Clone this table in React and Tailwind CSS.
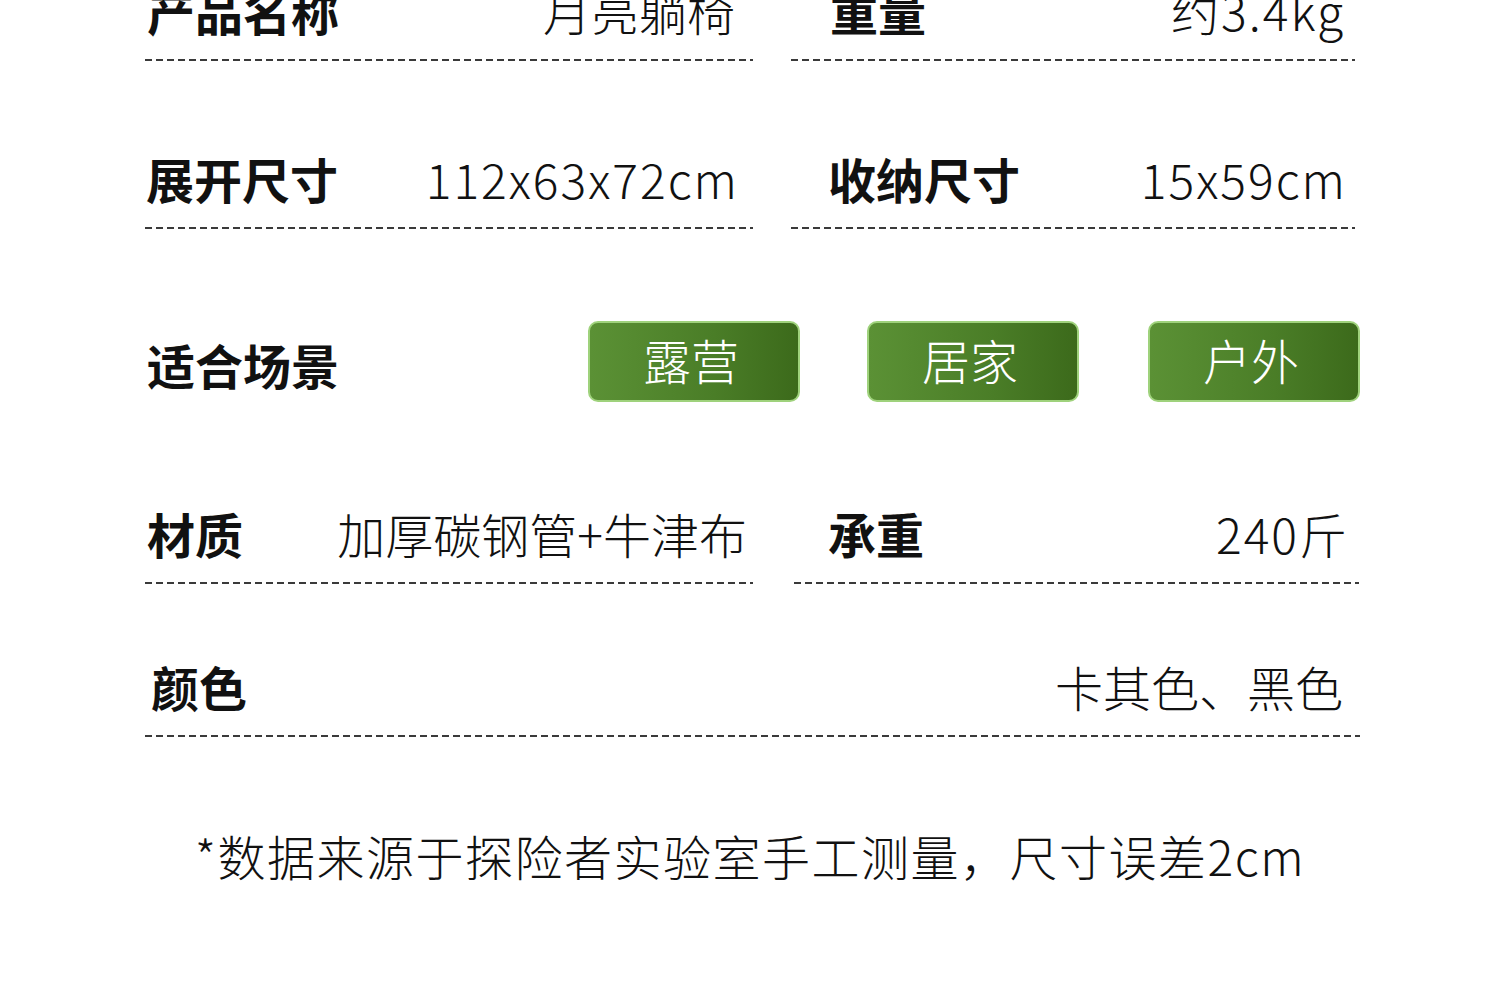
import React from 'react';

const FONT = "font-['Noto_Sans_CJK_SC','Noto_Sans',sans-serif]";
const DASH = 'h-[2px] bg-[repeating-linear-gradient(90deg,#3a3a3a_0_7px,transparent_7px_11px)]';

const SCENES = ['露营', '居家', '户外'];

function Cell({ label, value, labelPad = '', valuePad = 'pr-[16px]', width = 'w-[608px]', wide = false }) {
  return (
    <div className={width}>
      <div className={`flex h-[56px] items-start justify-between leading-[46px] ${valuePad}`}>
        <span className={`text-[48px] font-bold text-[#111] ${labelPad}`}>{label}</span>
        <span className={`text-[48px] font-light text-[#111] ${wide ? 'tracking-[2px] -mr-[2px]' : ''}`}>{value}</span>
      </div>
      <div className={`mt-[16px] ${DASH}`} />
    </div>
  );
}

export default function App() {
  return (
    <div className={`w-[1500px] h-[1000px] overflow-hidden bg-white ${FONT}`}>
      <div className="mt-[-13px] pl-[145px]">
        {/* Name + weight */}
        <div className="flex gap-[38px]">
          <Cell label="产品名称" value="月亮躺椅" labelPad="pl-[2px]" valuePad="pr-[18px]" />
          <Cell label="重量" value="约3.4kg" labelPad="pl-[39px]" valuePad="pr-[12px]" width="w-[564px]" wide />
        </div>

        {/* Sizes */}
        <div className="mt-[94px] flex gap-[38px]">
          <Cell label="展开尺寸" value="112x63x72cm" labelPad="pl-[1px]" valuePad="pr-[16px]" wide />
          <Cell label="收纳尺寸" value="15x59cm" labelPad="pl-[37px]" valuePad="pr-[10px]" width="w-[564px]" wide />
        </div>

        {/* Scenes */}
        <div className="mt-[92px] flex h-[80px] items-center">
          <span className="mt-[6px] pl-[2px] text-[48px] font-bold text-[#111] leading-[56px]">适合场景</span>
          <div className="ml-[249px] flex gap-[67px]">
            {SCENES.map((s, i) => (
              <div
                key={s}
                className={`flex h-[81px] w-[212px] items-center justify-center rounded-[10px] border-2 border-[#9fd27c] bg-[linear-gradient(90deg,#5b9135,#4a7d27_60%,#3c6a1b)] pb-[4px] pr-[6px] text-[48px] font-light text-white ${i === 2 ? 'ml-[2px]' : ''}`}
              >
                {s}
              </div>
            ))}
          </div>
        </div>

        {/* Material + load */}
        <div className="mt-[109px] flex gap-[41px]">
          <Cell label="材质" value="加厚碳钢管+牛津布" labelPad="pl-[2px]" valuePad="pr-[6px]" />
          <Cell label="承重" value="240斤" labelPad="pl-[34px]" valuePad="pr-[12px]" width="w-[565px]" wide />
        </div>

        {/* Colour */}
        <div className="mt-[79px] w-[1215px]">
          <div className="flex h-[56px] items-start justify-between pr-[17px] leading-[46px]">
            <span className="pl-[6px] text-[48px] font-bold text-[#111]">颜色</span>
            <span className="text-[48px] font-light text-[#111]">卡其色、黑色</span>
          </div>
          <div className={`mt-[16px] ${DASH}`} />
        </div>
      </div>

      {/* Footnote */}
      <div className="mt-[95px] text-center text-[48px] font-light leading-[46px] tracking-[1.5px] text-[#111]">
        *数据来源于探险者实验室手工测量，尺寸误差2cm
      </div>
    </div>
  );
}
